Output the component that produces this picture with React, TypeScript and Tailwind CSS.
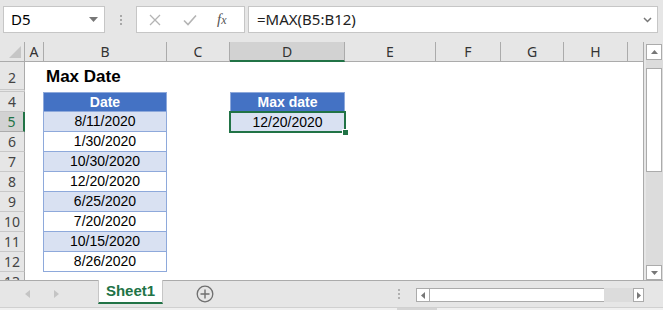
const font = { fontFamily: '"Liberation Sans", Arial, sans-serif' }

const cols = [
  { label: 'A', w: 'w-[19px]' },
  { label: 'B', w: 'w-[123px]' },
  { label: 'C', w: 'w-[63px]' },
  { label: 'D', w: 'w-[115px]' },
  { label: 'E', w: 'w-[91px]' },
  { label: 'F', w: 'w-[65px]' },
  { label: 'G', w: 'w-[63px]' },
  { label: 'H', w: 'w-[64px]' },
]

const dates = ['8/11/2020', '1/30/2020', '10/30/2020', '12/20/2020', '6/25/2020', '7/20/2020', '10/15/2020', '8/26/2020']

function RowHead({ n, active }: { n: string; active?: boolean }) {
  return (
    <div
      className={
        'w-[25px] shrink-0 h-full flex items-center justify-center border-r border-b text-[14px] ' +
        (active
          ? 'bg-[#d2d2d2] border-r-2 border-r-[#217346] border-b-[#ababab] text-[#217346]'
          : 'bg-[#e6e6e6] border-r-[#ababab] border-b-[#c8c8c8] text-[#444]')
      }
      style={{ fontFamily: '"Noto Sans", "Open Sans", sans-serif' }}
    >
      {n}
    </div>
  )
}

export default function App() {
  return (
    <div className="w-[663px] h-[310px] bg-[#e6e6e6] flex flex-col overflow-hidden text-black" style={font}>
      {/* Formula bar */}
      <div className="h-[42px] shrink-0 flex items-start pt-[6px] pl-[3px]">
        <div className="w-[102px] h-[27px] bg-white border border-[#c6c6c6] flex items-center pl-[7px] pr-[6px] text-[15px]" style={{ fontFamily: '"Noto Sans", sans-serif' }}>
          <span className="flex-1">D5</span>
          <svg width="9" height="5" viewBox="0 0 9 5"><path d="M0 0h9L4.5 5z" fill="#777" /></svg>
        </div>
        <div className="w-[31px] h-[27px] flex flex-col items-center justify-center gap-[2px]">
          <span className="w-[2px] h-[2px] bg-[#a8a8a8]" />
          <span className="w-[2px] h-[2px] bg-[#a8a8a8]" />
          <span className="w-[2px] h-[2px] bg-[#a8a8a8]" />
        </div>
        <div className="w-[109px] h-[27px] bg-white border border-[#c6c6c6] flex items-center">
          <svg className="ml-[12px]" width="12" height="12" viewBox="0 0 12 12"><path d="M1 1l10 10M11 1L1 11" stroke="#b4b4b4" strokeWidth="1.3" /></svg>
          <svg className="ml-[22px]" width="14" height="12" viewBox="0 0 14 12"><path d="M1 6.5l4 4L13 1.5" stroke="#b4b4b4" strokeWidth="1.6" fill="none" /></svg>
          <span className="ml-[20px] text-[15px] italic text-[#555]" style={{ fontFamily: '"Liberation Serif", serif' }}>f<span className="text-[12px]">x</span></span>
        </div>
        <div className="ml-[3px] w-[410px] h-[27px] bg-white border border-[#c6c6c6] flex items-center pl-[8px] pr-[5px] text-[15px]" style={{ fontFamily: '"Noto Sans", sans-serif' }}>
          <span className="flex-1 text-[#222]">=MAX(B5:B12)</span>
          <svg width="9" height="6" viewBox="0 0 9 6"><path d="M1 1l3.5 3.5L8 1" stroke="#777" strokeWidth="1.5" fill="none" /></svg>
        </div>
      </div>

      {/* Sheet area */}
      <div className="h-[238px] shrink-0 flex">
        <div className="w-[644px] h-full border-r border-[#ababab] flex flex-col bg-white overflow-hidden">
          {/* column headers */}
          <div className="h-[20px] shrink-0 flex bg-[#e6e6e6] text-[14px] text-[#333]" style={{ fontFamily: '"Noto Sans", "Open Sans", sans-serif' }}>
            <div className="w-[25px] shrink-0 border-r border-b border-[#ababab] flex items-end justify-end pr-[3px] pb-[3px]">
              <svg width="12" height="12" viewBox="0 0 12 12"><path d="M12 0v12H0z" fill="#c6c6c6" /></svg>
            </div>
            {cols.map((c) => (
              <div
                key={c.label}
                className={
                  c.w +
                  ' shrink-0 flex items-center justify-center border-r border-r-[#ababab] ' +
                  (c.label === 'D' ? 'bg-[#d2d2d2] border-b-2 border-b-[#217346]' : 'border-b border-b-[#ababab]')
                }
              >
                {c.label}
              </div>
            ))}
            <div className="flex-1 border-b border-[#ababab]" />
          </div>

          {/* row 2 */}
          <div className="h-[30px] shrink-0 flex">
            <div className="w-[25px] shrink-0 bg-[#e6e6e6] border-r border-[#ababab] border-b-[3px] border-b-[#c8c8c8] border-double flex items-end justify-center pb-[1px] text-[14px] text-[#444]" style={{ fontFamily: '"Noto Sans", sans-serif' }}>
              2
            </div>
            <div className="w-[19px] shrink-0" />
            <div className="pl-[2px] pb-[3px] flex items-end text-[17px] font-bold">Max Date</div>
          </div>

          {/* rows 4-12 */}
          {['4', '5', '6', '7', '8', '9', '10', '11', '12'].map((n, i) => {
            const isHead = i === 0
            const date = isHead ? null : dates[i - 1]
            const striped = !isHead && i % 2 === 1
            return (
              <div key={n} className="h-[20px] shrink-0 flex text-[14px]">
                <RowHead n={n} active={n === '5'} />
                <div className="w-[18px] shrink-0" />
                <div
                  className={
                    'w-[124px] shrink-0 flex items-center justify-center border-x border-b border-[#8ea9db] ' +
                    (isHead ? 'border-t bg-[#4472c4] text-white font-bold' : striped ? 'bg-[#d9e1f2]' : 'bg-white')
                  }
                >
                  {isHead ? 'Date' : date}
                </div>
                <div className="w-[63px] shrink-0" />
                {isHead && (
                  <div className="w-[115px] shrink-0 flex items-center justify-center border border-[#8ea9db] bg-[#4472c4] text-white font-bold">
                    Max date
                  </div>
                )}
                {n === '5' && (
                  <div className="relative w-[115px] shrink-0 flex items-center justify-center bg-[#d9e1f2]">
                    12/20/2020
                    <div className="absolute -left-px -top-px -right-px -bottom-px border-2 border-[#217346]" />
                    <div className="absolute -right-[4px] -bottom-[4px] w-[7px] h-[7px] bg-[#217346] border border-white" />
                  </div>
                )}
              </div>
            )
          })}

          {/* row 13 partially visible */}
          <div className="h-[8px] shrink-0 flex overflow-hidden">
            <div className="w-[25px] shrink-0 bg-[#e6e6e6] border-r border-[#ababab] flex justify-center text-[14px] text-[#444] leading-[20px]" style={{ fontFamily: '"Noto Sans", sans-serif' }}>
              13
            </div>
          </div>
        </div>

        {/* vertical scrollbar */}
        <div className="flex-1 flex flex-col pl-[2px] pt-[2px]">
          <div className="w-[16px] h-[16px] bg-white border border-[#ababab] flex items-center justify-center">
            <svg width="7" height="4" viewBox="0 0 7 4"><path d="M0 4h7L3.5 0z" fill="#777" /></svg>
          </div>
          <div className="flex-1 bg-[#dcdcdc] pt-[8px] flex flex-col">
            <div className="w-[16px] h-[104px] bg-white border border-[#ababab]" />
            <div className="flex-1" />
            <div className="w-[16px] h-[15px] bg-white border border-[#ababab] flex items-center justify-center">
              <svg width="7" height="4" viewBox="0 0 7 4"><path d="M0 0h7L3.5 4z" fill="#777" /></svg>
            </div>
          </div>
        </div>
      </div>

      {/* tab bar */}
      <div className="h-[27px] shrink-0 flex items-start border-t border-[#ababab]">
        <div className="w-[98px] h-full flex items-center">
          <svg className="ml-[25px]" width="5" height="8" viewBox="0 0 5 8"><path d="M5 0v8L0 4z" fill="#c4c4c4" /></svg>
          <svg className="ml-[24px]" width="5" height="8" viewBox="0 0 5 8"><path d="M0 0v8l5-4z" fill="#c4c4c4" /></svg>
        </div>
        <div className="w-[65px] h-[24px] bg-white border-x border-[#c6c6c6] border-b-2 border-b-[#217346] flex items-center justify-center text-[15px] font-bold text-[#217346] -mt-px">
          Sheet1
        </div>
        <div className="w-[84px] h-full flex items-center justify-center pb-[1px]">
          <svg width="18" height="18" viewBox="0 0 18 18">
            <circle cx="9" cy="9" r="7.8" stroke="#6f6f6f" strokeWidth="1.3" fill="none" />
            <path d="M9 4.5v9M4.5 9h9" stroke="#6f6f6f" strokeWidth="1.4" />
          </svg>
        </div>
        <div className="w-[169px] h-full flex items-center justify-end pr-[16px]">
          <div className="flex flex-col gap-[2px]">
            <span className="w-[2px] h-[2px] bg-[#b0b0b0]" />
            <span className="w-[2px] h-[2px] bg-[#b0b0b0]" />
            <span className="w-[2px] h-[2px] bg-[#b0b0b0]" />
          </div>
        </div>
        <div className="mt-[7px] w-[228px] h-[14px] flex">
          <div className="w-[14px] h-full bg-white border border-[#ababab] flex items-center justify-center">
            <svg width="4" height="7" viewBox="0 0 4 7"><path d="M4 0v7L0 3.5z" fill="#777" /></svg>
          </div>
          <div className="w-[174px] h-full bg-white border-y border-[#ababab]" />
          <div className="w-[29px] h-full bg-[#dcdcdc]" />
          <div className="w-[11px] h-full bg-white border border-[#ababab] flex items-center justify-center">
            <svg width="4" height="7" viewBox="0 0 4 7"><path d="M0 0v7l4-3.5z" fill="#777" /></svg>
          </div>
        </div>
      </div>
      <div className="flex-1 bg-[#f0f0f0] border-t border-[#d0d0d0] flex">
        <div className="ml-[397px] w-[40px] bg-[#d4d4d4]" />
      </div>
    </div>
  )
}
